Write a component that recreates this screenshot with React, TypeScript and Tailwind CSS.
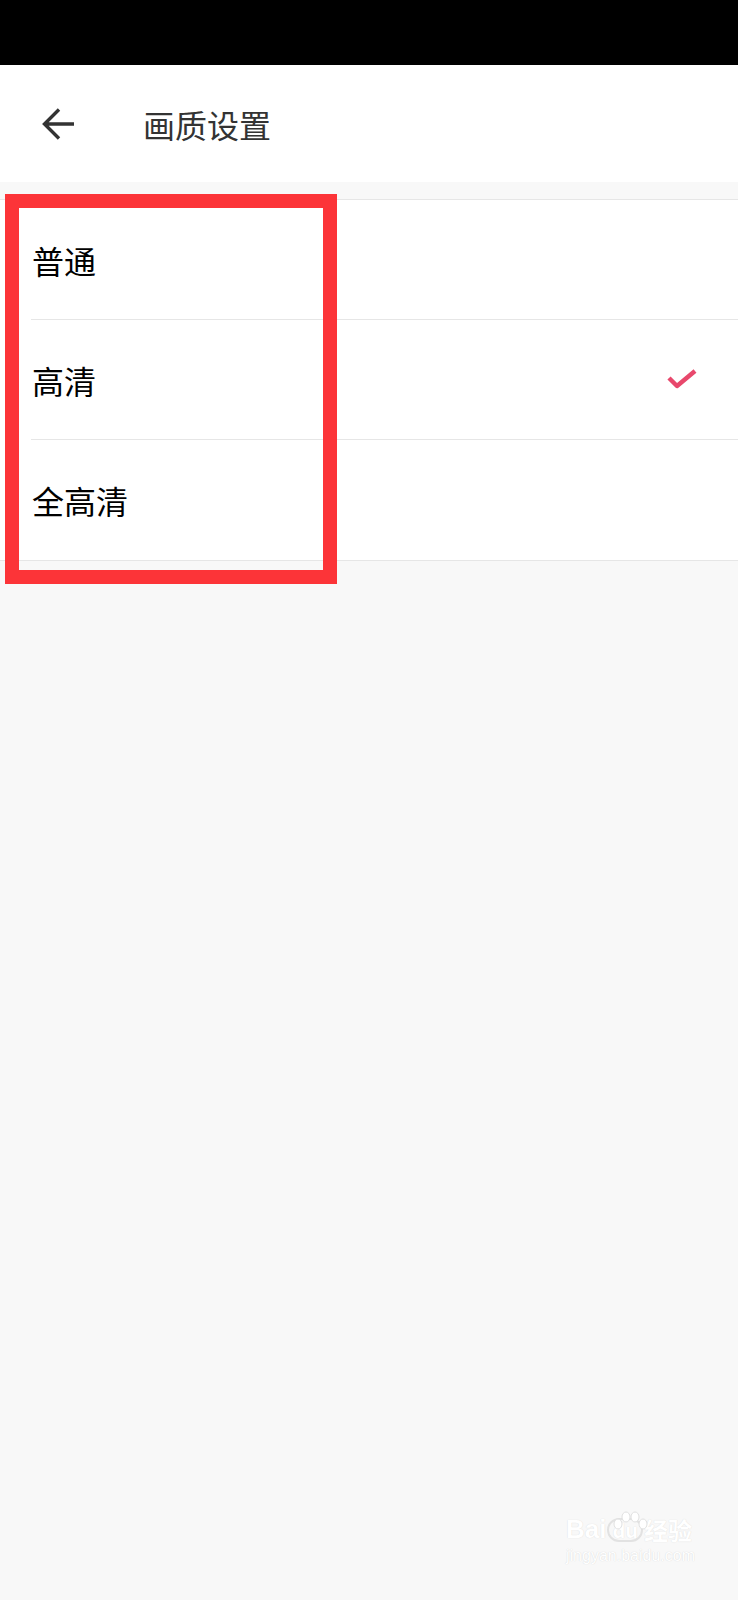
export default function App() {
  const options = ["普通", "高清", "全高清"];
  const selected = 1;

  return (
    <div
      className="relative min-h-[1600px] w-full bg-[#f8f8f8] overflow-hidden"
      style={{ fontFamily: '"Noto Sans CJK SC", "Noto Sans", sans-serif' }}
    >
      {/* Status bar */}
      <div className="h-[65px] bg-black" />

      {/* Header */}
      <div className="flex h-[117px] items-center bg-white">
        <div className="ml-[40px] flex h-[36px] w-[36px] items-center justify-center">
          <svg width="34" height="34" viewBox="0 0 34 34" fill="none">
            <path
              d="M33 17H4M18 2.5L3.5 17L18 31.5"
              stroke="#333333"
              strokeWidth="3.4"
            />
          </svg>
        </div>
        <h1 className="ml-[67px] text-[32px] leading-none text-[#333333]">画质设置</h1>
      </div>

      <div className="h-[17px]" />

      {/* Options */}
      <div className="border-t border-[#e6e6e6] bg-white">
        {options.map((label, i) => {
          const last = i === options.length - 1;
          return (
            <div key={label} className={last ? "border-b border-[#e6e6e6]" : "pl-[31px]"}>
              <div
                className={
                  last
                    ? "flex h-[120px] items-center pl-[32px] pr-[40px]"
                    : "flex h-[120px] items-center border-b border-[#e6e6e6] pl-px pr-[40px]"
                }
              >
                <span className="flex-1 text-[32px] leading-none text-black">{label}</span>
                {i === selected && (
                  <svg width="32" height="26" viewBox="0 0 32 26" fill="none">
                    <polyline
                      points="3,11 11,19 29,4"
                      stroke="#e8486c"
                      strokeWidth="4.5"
                      strokeLinejoin="round"
                    />
                  </svg>
                )}
              </div>
            </div>
          );
        })}
      </div>

      {/* Red annotation box */}
      <div className="absolute left-[5px] top-[194px] h-[390px] w-[332px] border-[14px] border-[#fc3438]" />

      {/* Watermark */}
      <div className="absolute left-[566px] top-[1516px] flex flex-col items-start">
        <div className="relative flex items-end text-[26px] font-bold leading-none text-white [text-shadow:0_0_1px_#d6d6d6]">
          <span style={{ fontFamily: '"Liberation Sans", sans-serif' }}>Bai</span>
          <span className="mx-[1px] rounded-full border-2 border-[#e2e2e2] px-[3px] text-[20px]">du</span>
          <span className="text-[24px]">经验</span>
          <svg className="absolute left-[44px] top-[-6px]" width="40" height="22" viewBox="0 0 40 22" fill="white" stroke="#e0e0e0" strokeWidth="1">
            <ellipse cx="8" cy="14" rx="4" ry="5" />
            <ellipse cx="16" cy="7" rx="4" ry="5" />
            <ellipse cx="25" cy="7" rx="4" ry="5" />
            <ellipse cx="33" cy="14" rx="4" ry="5" />
          </svg>
        </div>
        <div
          className="mt-[6px] text-[16px] leading-none text-white [text-shadow:0_0_1px_#cfcfcf]"
          style={{ fontFamily: '"Liberation Sans", sans-serif' }}
        >
          jingyan.baidu.com
        </div>
      </div>
    </div>
  );
}
